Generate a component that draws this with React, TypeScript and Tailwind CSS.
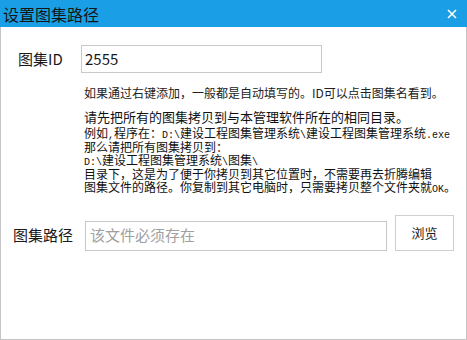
const sans = { fontFamily: '"Noto Sans CJK SC", "Noto Sans", sans-serif' };

function Mono({ children }: { children: React.ReactNode }) {
  return <span className="text-[10px] leading-none font-['Liberation_Mono',monospace]">{children}</span>;
}

function Line({ children }: { children: React.ReactNode }) {
  return <div className="h-[13.5px] leading-[13.5px] whitespace-pre">{children}</div>;
}

export default function App() {
  return (
    <div className="w-[467px] h-[340px] flex flex-col bg-white text-[#1a1a1a]" style={sans}>
      <div className="h-[27px] bg-[#1a9fe6] flex items-center justify-between pl-[3px] pr-[10px]">
        <span className="text-[16px] leading-none text-[#151515]">设置图集路径</span>
        <svg width="10" height="10" viewBox="0 0 10 10" className="mt-[1px]">
          <path d="M1 1 L9 9 M9 1 L1 9" stroke="#fff" strokeWidth="1.6" />
        </svg>
      </div>
      <div className="flex-1 border-x border-b border-[#c4c4c4] flex flex-col">
        <div className="flex items-center mt-[18px] h-[28px]">
          <span className="w-[80px] pl-[17px] text-[15px]">图集ID</span>
          <div className="w-[241px] h-[28px] border border-[#c9c9c9] flex items-center pl-[3px] text-[15px]">
            2555
          </div>
        </div>
        <div className="pl-[83px] mt-[12px] text-[12px] leading-[16px] text-[#222]">
          如果通过右键添加，一般都是自动填写的。ID可以点击图集名看到。
        </div>
        <div className="pl-[83px] mt-[8px] text-[13px] leading-[16px] text-[#111]">
          请先把所有的图集拷贝到与本管理软件所在的相同目录。
        </div>
        <div className="pl-[83px] mt-[1px] text-[12px] text-[#111]">
          <Line>例如<Mono>,</Mono>程序在：<Mono>D:\</Mono>建设工程图集管理系统<Mono>\</Mono>建设工程图集管理系统<Mono>.exe</Mono></Line>
          <Line>那么请把所有图集拷贝到：</Line>
          <Line><Mono>D:\</Mono>建设工程图集管理系统<Mono>\</Mono>图集<Mono>\</Mono></Line>
          <Line>目录下，这是为了便于你拷贝到其它位置时，不需要再去折腾编辑</Line>
          <Line>图集文件的路径。你复制到其它电脑时，只需要拷贝整个文件夹就<Mono>OK</Mono>。</Line>
        </div>
        <div className="flex items-end mt-[21px]">
          <span className="w-[84px] pl-[12px] text-[15px] h-[30px] flex items-center">图集路径</span>
          <div className="w-[302px] h-[30px] border border-[#c9c9c9] flex items-center pl-[4px] text-[15px] text-[#a0a0a0]">
            该文件必须存在
          </div>
          <button className="ml-[8px] w-[59px] h-[36px] border border-[#cfcfcf] bg-white text-[13px] text-[#222]">
            浏览
          </button>
        </div>
      </div>
    </div>
  );
}
